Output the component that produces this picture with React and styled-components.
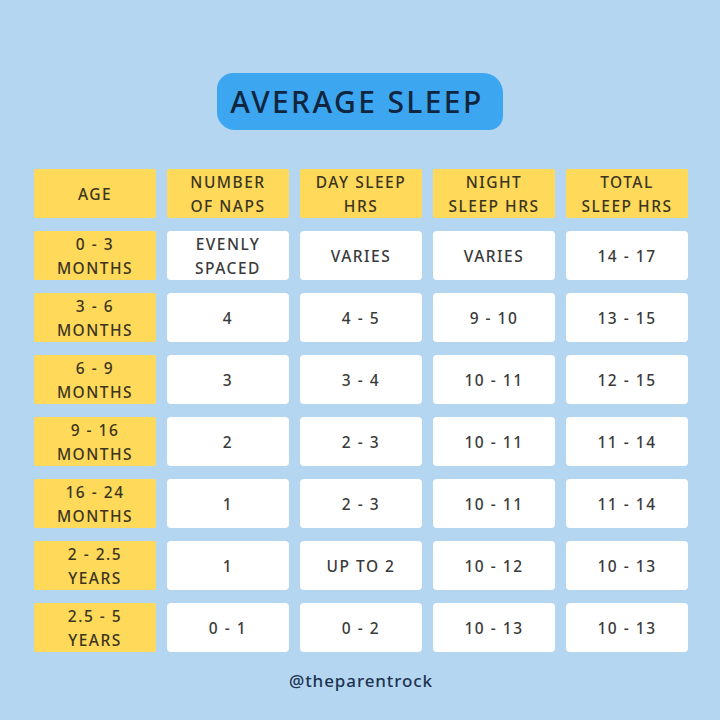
import React from "react";
import styled, { createGlobalStyle } from "styled-components";

const Global = createGlobalStyle`
  html, body { margin: 0; padding: 0; }
  body { background: #b4d6f1; font-family: "Noto Sans", sans-serif; }
`;

const Page = styled.div`
  width: 720px;
  height: 720px;
  background: #b4d6f1;
  display: flex;
  flex-direction: column;
  align-items: center;
  box-sizing: border-box;
  padding-top: 73px;
`;

const TitlePill = styled.div`
  width: 286px;
  height: 57px;
  background: #3da6f1;
  border-radius: 16px 20px 14px 18px;
  display: flex;
  align-items: center;
  justify-content: center;
  box-sizing: border-box;
  padding-right: 6px;
  color: #10263f;
  font-family: "Noto Sans", sans-serif;
  font-size: 30px;
  font-weight: 500;
  letter-spacing: 2.4px;
`;

const Grid = styled.div`
  margin-top: 39px;
  margin-left: 2px;
  display: grid;
  grid-template-columns: repeat(5, 122px);
  grid-auto-rows: 49px;
  column-gap: 11px;
  row-gap: 13px;
`;

const Cell = styled.div`
  background: ${(p) => (p.$head ? "#fed95a" : "#ffffff")};
  border-radius: ${(p) => (p.$head ? "2px" : "4px")};
  display: flex;
  align-items: center;
  justify-content: center;
  text-align: center;
  color: ${(p) => (p.$head ? "#3b3520" : "#3a3a3a")};
  font-family: "Noto Sans", sans-serif;
  font-size: 15.5px;
  font-weight: 500;
  letter-spacing: 1.5px;
  line-height: 24px;
  white-space: pre-line;
`;

const Footer = styled.div`
  margin-top: 17px;
  margin-left: 2px;
  color: #1d3350;
  font-family: "Noto Sans", sans-serif;
  font-size: 17px;
  font-weight: 500;
  letter-spacing: 0.9px;
`;

const headers = ["AGE", "NUMBER\nOF NAPS", "DAY SLEEP\nHRS", "NIGHT\nSLEEP HRS", "TOTAL\nSLEEP HRS"];
const rows = [
  ["0 - 3\nMONTHS", "EVENLY\nSPACED", "VARIES", "VARIES", "14 - 17"],
  ["3 - 6\nMONTHS", "4", "4 - 5", "9 - 10", "13 - 15"],
  ["6 - 9\nMONTHS", "3", "3 - 4", "10 - 11", "12 - 15"],
  ["9 - 16\nMONTHS", "2", "2 - 3", "10 - 11", "11 - 14"],
  ["16 - 24\nMONTHS", "1", "2 - 3", "10 - 11", "11 - 14"],
  ["2 - 2.5\nYEARS", "1", "UP TO 2", "10 - 12", "10 - 13"],
  ["2.5 - 5\nYEARS", "0 - 1", "0 - 2", "10 - 13", "10 - 13"],
];

export default function App() {
  return (
    <>
      <Global />
      <Page>
        <TitlePill>AVERAGE SLEEP</TitlePill>
        <Grid>
          {headers.map((h, i) => (
            <Cell key={"h" + i} $head>{h}</Cell>
          ))}
          {rows.map((r, ri) =>
            r.map((c, ci) => (
              <Cell key={ri + "-" + ci} $head={ci === 0}>{c}</Cell>
            ))
          )}
        </Grid>
        <Footer>@theparentrock</Footer>
      </Page>
    </>
  );
}
